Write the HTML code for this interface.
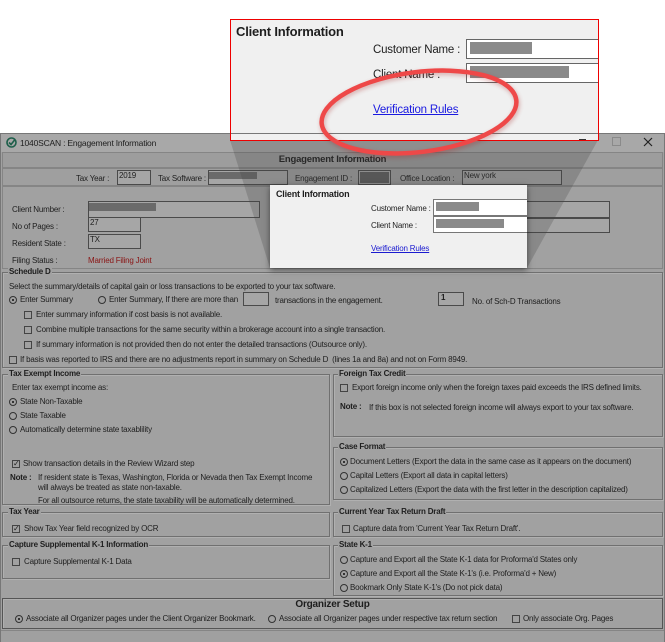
<!DOCTYPE html>
<html><head><meta charset="utf-8"><style>
*{margin:0;padding:0;box-sizing:border-box}
body{width:665px;height:642px;overflow:hidden;background:#fff;font-family:"Liberation Sans",sans-serif;font-size:8px;color:#1e1e1e;position:relative}
.a{position:absolute;white-space:nowrap}
.t{position:absolute;white-space:nowrap;line-height:10px;letter-spacing:-0.2px}
.b{font-weight:bold}
.box{position:absolute;border:1px solid #707070;box-shadow:inset 1px 1px 0 #b0b0b0,1px 1px 0 #b0b0b0}
.in{position:absolute;border:1px solid #4a4a4a;background:#a6a6a6}
.r{position:absolute;width:8px;height:8px;border:1px solid #333;border-radius:50%}
.r.on::after{content:"";position:absolute;left:2px;top:2px;width:2px;height:2px;border-radius:50%;background:#111}
.c{position:absolute;width:8px;height:8px;border:1px solid #444;font-size:8px;line-height:6px;text-align:center}
.fill{position:absolute;background:#6a6a6a}
</style></head><body>
<div class="a" style="left:0;top:133px;width:665px;height:509px;background:#a1a1a1;border:1px solid #777"></div>
<div class="a" style="left:1px;top:134px;width:663px;height:18px;background:#a8a8a8"></div>
<svg class="a" style="left:6px;top:137px" width="11" height="11" viewBox="0 0 11 11"><circle cx="5.5" cy="5.5" r="4.5" fill="none" stroke="#1d5f4a" stroke-width="1.6"/><path d="M3 5.5l2 2 4-5" fill="none" stroke="#1d5f4a" stroke-width="1.6"/></svg>
<div class="t" style="left:20px;top:138px;font-size:8.5px">1040SCAN : Engagement Information</div>
<div class="a" style="left:612px;top:137px;width:9px;height:9px;border:1px solid #8a8a8a"></div>
<svg class="a" style="left:643px;top:137px" width="10" height="10"><path d="M1 1L9 9M9 1L1 9" stroke="#222" stroke-width="1.2"/></svg>
<div class="a" style="left:2px;top:152px;width:661px;height:16px;background:#9d9d9d;border:1px solid #858585"></div>
<div class="t b" style="left:0;width:665px;text-align:center;top:155px;font-size:9.5px">Engagement Information</div>
<div class="a" style="left:2px;top:168px;width:661px;height:18px;background:#9f9f9f;border:1px solid #858585"></div>
<div class="t" style="left:76px;top:174px">Tax Year :</div>
<div class="in" style="left:117px;top:170px;width:34px;height:15px"></div><div class="t" style="left:119px;top:171px">2019</div>
<div class="t" style="left:158px;top:174px">Tax Software :</div>
<div class="in" style="left:208px;top:170px;width:80px;height:15px"></div><div class="fill" style="left:209px;top:172px;width:48px;height:7px"></div>
<div class="t" style="left:295px;top:174px">Engagement ID :</div>
<div class="in" style="left:358px;top:170px;width:33px;height:15px"></div><div class="fill" style="left:360px;top:172px;width:29px;height:11px;background:#5e5e5e"></div>
<div class="t" style="left:400px;top:174px">Office Location :</div>
<div class="in" style="left:462px;top:170px;width:100px;height:15px"></div><div class="t" style="left:464px;top:171px">New york</div>
<div class="a" style="left:2px;top:186px;width:661px;height:83px;border:1px solid #858585"></div>
<div class="t" style="left:12px;top:205px">Client Number :</div>
<div class="in" style="left:88px;top:201px;width:172px;height:17px"></div><div class="fill" style="left:89px;top:203px;width:67px;height:8px"></div>
<div class="t" style="left:12px;top:222px">No of Pages :</div>
<div class="in" style="left:88px;top:217px;width:53px;height:15px"></div><div class="t" style="left:90px;top:218px">27</div>
<div class="t" style="left:12px;top:239px">Resident State :</div>
<div class="in" style="left:88px;top:234px;width:53px;height:15px"></div><div class="t" style="left:90px;top:235px">TX</div>
<div class="t" style="left:12px;top:256px">Filing Status :</div>
<div class="t" style="left:88px;top:256px;color:#8a1515">Married Filing Joint</div>
<div class="in" style="left:520px;top:201px;width:90px;height:17px"></div>
<div class="in" style="left:520px;top:218px;width:90px;height:15px"></div>
<div class="box" style="left:2px;top:272px;width:661px;height:96px"></div>
<div class="t b" style="left:8px;top:267px;background:#a1a1a1;padding:0 1px">Schedule D</div>
<div class="t" style="left:9px;top:282px">Select the summary/details of capital gain or loss transactions to be exported to your tax software.</div>
<div class="r on" style="left:9px;top:296px"></div><div class="t" style="left:20px;top:295px">Enter Summary</div>
<div class="r" style="left:98px;top:296px"></div><div class="t" style="left:109px;top:295px">Enter Summary, If there are more than</div>
<div class="in" style="left:243px;top:292px;width:26px;height:14px"></div>
<div class="t" style="left:275px;top:296px">transactions in the engagement.</div>
<div class="in" style="left:438px;top:292px;width:26px;height:14px"></div><div class="t b" style="left:441px;top:293px">1</div>
<div class="t" style="left:472px;top:297px">No. of Sch-D Transactions</div>
<div class="c" style="left:24px;top:311px"></div><div class="t" style="left:36px;top:310px">Enter summary information if cost basis is not available.</div>
<div class="c" style="left:24px;top:326px"></div><div class="t" style="left:36px;top:325px">Combine multiple transactions for the same security within a brokerage account into a single transaction.</div>
<div class="c" style="left:24px;top:341px"></div><div class="t" style="left:36px;top:340px">If summary information is not provided then do not enter the detailed transactions (Outsource only).</div>
<div class="c" style="left:9px;top:356px"></div><div class="t" style="left:20px;top:355px">If basis was reported to IRS and there are no adjustments report in summary on Schedule D &nbsp;(lines 1a and 8a) and not on Form 8949.</div>
<div class="box" style="left:2px;top:374px;width:328px;height:131px"></div>
<div class="t b" style="left:8px;top:369px;background:#a1a1a1;padding:0 1px">Tax Exempt Income</div>
<div class="t" style="left:12px;top:383px">Enter tax exempt income as:</div>
<div class="r on" style="left:9px;top:398px"></div><div class="t" style="left:20px;top:397px">State Non-Taxable</div>
<div class="r" style="left:9px;top:412px"></div><div class="t" style="left:20px;top:411px">State Taxable</div>
<div class="r" style="left:9px;top:426px"></div><div class="t" style="left:20px;top:425px">Automatically determine state taxablility</div>
<div class="c" style="left:12px;top:460px">✓</div><div class="t" style="left:23px;top:459px">Show transaction details in the Review Wizard step</div>
<div class="t b" style="left:10px;top:473px">Note :</div>
<div class="t" style="left:38px;top:473px">If resident state is Texas, Washington, Florida or Nevada then Tax Exempt Income</div>
<div class="t" style="left:38px;top:483px">will always be treated as state non-taxable.</div>
<div class="t" style="left:38px;top:496px">For all outsource returns, the state taxability will be automatically determined.</div>
<div class="box" style="left:2px;top:512px;width:328px;height:25px"></div>
<div class="t b" style="left:8px;top:507px;background:#a1a1a1;padding:0 1px">Tax Year</div>
<div class="c" style="left:12px;top:525px">✓</div><div class="t" style="left:24px;top:524px">Show Tax Year field recognized by OCR</div>
<div class="box" style="left:2px;top:545px;width:328px;height:34px"></div>
<div class="t b" style="left:8px;top:540px;background:#a1a1a1;padding:0 1px">Capture Supplemental K-1 Information</div>
<div class="c" style="left:12px;top:558px"></div><div class="t" style="left:24px;top:557px">Capture Supplemental K-1 Data</div>
<div class="box" style="left:333px;top:374px;width:330px;height:63px"></div>
<div class="t b" style="left:338px;top:369px;background:#a1a1a1;padding:0 1px">Foreign Tax Credit</div>
<div class="c" style="left:340px;top:384px"></div><div class="t" style="left:352px;top:383px">Export foreign income only when the foreign taxes paid exceeds the IRS defined limits.</div>
<div class="t b" style="left:340px;top:402px">Note :</div><div class="t" style="left:369px;top:403px">If this box is not selected foreign income will always export to your tax software.</div>
<div class="box" style="left:333px;top:447px;width:330px;height:53px"></div>
<div class="t b" style="left:338px;top:442px;background:#a1a1a1;padding:0 1px">Case Format</div>
<div class="r on" style="left:340px;top:458px"></div><div class="t" style="left:350px;top:457px">Document Letters (Export the data in the same case as it appears on the document)</div>
<div class="r" style="left:340px;top:472px"></div><div class="t" style="left:350px;top:471px">Capital Letters (Export all data in capital letters)</div>
<div class="r" style="left:340px;top:486px"></div><div class="t" style="left:350px;top:485px">Capitalized Letters (Export the data with the first letter in the description capitalized)</div>
<div class="box" style="left:333px;top:512px;width:330px;height:25px"></div>
<div class="t b" style="left:338px;top:507px;background:#a1a1a1;padding:0 1px">Current Year Tax Return Draft</div>
<div class="c" style="left:342px;top:525px"></div><div class="t" style="left:353px;top:524px">Capture data from 'Current Year Tax Return Draft'.</div>
<div class="box" style="left:333px;top:545px;width:330px;height:51px"></div>
<div class="t b" style="left:338px;top:540px;background:#a1a1a1;padding:0 1px">State K-1</div>
<div class="r" style="left:340px;top:556px"></div><div class="t" style="left:350px;top:555px">Capture and Export all the State K-1 data for Proforma'd States only</div>
<div class="r on" style="left:340px;top:570px"></div><div class="t" style="left:350px;top:569px">Capture and Export all the State K-1's (i.e. Proforma'd + New)</div>
<div class="r" style="left:340px;top:584px"></div><div class="t" style="left:350px;top:583px">Bookmark Only State K-1's (Do not pick data)</div>
<div class="a" style="left:2px;top:598px;width:661px;height:31px;border:1px solid #555;box-shadow:inset 1px 1px 0 #b0b0b0"></div>
<div class="t b" style="left:0;width:665px;text-align:center;top:600px;font-size:10px">Organizer Setup</div>
<div class="r on" style="left:15px;top:615px"></div><div class="t" style="left:26px;top:614px">Associate all Organizer pages under the Client Organizer Bookmark.</div>
<div class="r" style="left:268px;top:615px"></div><div class="t" style="left:279px;top:614px">Associate all Organizer pages under respective tax return section</div>
<div class="c" style="left:512px;top:615px"></div><div class="t" style="left:523px;top:614px">Only associate Org. Pages</div>
<div class="a" style="left:1px;top:630px;width:663px;height:12px;background:#a0a0a0;border-top:1px solid #858585"></div>
<svg class="a" style="left:0;top:0" width="665" height="642"><polygon points="230,140 598,140 527,268 270,268" fill="#444" opacity="0.25"/></svg>
<div class="a" style="left:270px;top:185px;width:257px;height:83px;background:#f0f0f0;box-shadow:0 2px 6px rgba(0,0,0,.5)"></div>
<div class="t b" style="left:276px;top:189px;font-size:9px">Client Information</div>
<div class="t" style="left:371px;top:204px;font-size:8px">Customer Name :</div>
<div class="a" style="left:433px;top:199px;width:94px;height:17px;background:#fff;border:1px solid #777;border-right:0"></div><div class="fill" style="left:436px;top:202px;width:43px;height:9px;background:#8a8a8a"></div>
<div class="t" style="left:371px;top:221px;font-size:8px">Client Name :</div>
<div class="a" style="left:433px;top:216px;width:94px;height:17px;background:#fff;border:1px solid #777;border-right:0"></div><div class="fill" style="left:436px;top:219px;width:68px;height:9px;background:#8a8a8a"></div>
<div class="t" style="left:371px;top:244px;font-size:8px;color:#1a1ad0;text-decoration:underline">Verification Rules</div>
<div class="a" style="left:230px;top:19px;width:369px;height:122px;background:#f0f0f0;border:1px solid #e00"></div>
<div class="a" style="left:231px;top:133px;width:367px;height:1px;background:#777"></div>
<div class="a" style="left:579px;top:139px;width:7px;height:1px;background:#333"></div>
<div class="t b" style="left:236px;top:24px;font-size:13px;line-height:15px">Client Information</div>
<div class="t" style="left:373px;top:44px;font-size:11.5px;line-height:13px">Customer Name :</div>
<div class="a" style="left:466px;top:39px;width:132px;height:20px;background:#fff;border:1px solid #666;border-right:0"></div><div class="fill" style="left:470px;top:42px;width:62px;height:12px;background:#8a8a8a"></div>
<div class="t" style="left:373px;top:69px;font-size:11.5px;line-height:13px">Client Name :</div>
<div class="a" style="left:466px;top:63px;width:132px;height:20px;background:#fff;border:1px solid #666;border-right:0"></div><div class="fill" style="left:470px;top:66px;width:99px;height:12px;background:#8a8a8a"></div>
<div class="t" style="left:373px;top:104px;font-size:11.5px;line-height:13px;color:#1a1ae0;text-decoration:underline">Verification Rules</div>
<svg class="a" style="left:0;top:0" width="665" height="642"><ellipse cx="420" cy="114" rx="98" ry="40" transform="rotate(-7 420 114)" fill="none" stroke="#a02020" stroke-width="5" opacity=".3" style="filter:blur(2px)"/><ellipse cx="419" cy="112" rx="98" ry="40" transform="rotate(-7 419 112)" fill="none" stroke="#ee4848" stroke-width="4.5"/></svg>
</body></html>
